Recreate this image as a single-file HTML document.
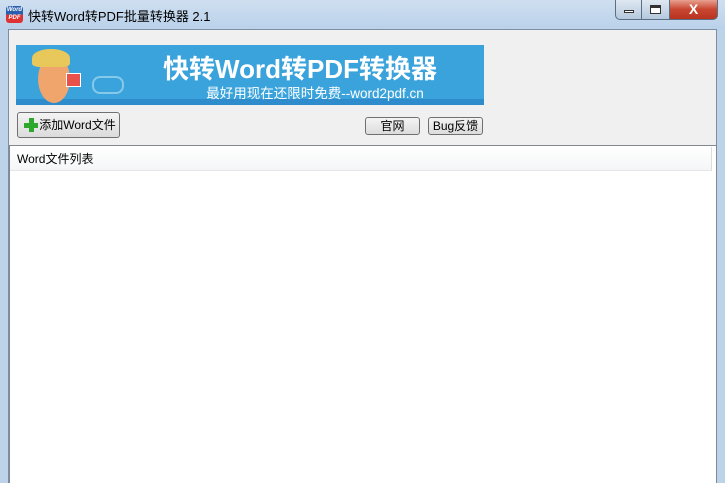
<!DOCTYPE html>
<html><head><meta charset="utf-8"><style>
*{margin:0;padding:0;box-sizing:border-box}
body{width:725px;height:483px;overflow:hidden;font-family:"Liberation Sans","Noto Sans CJK SC",sans-serif;background:#bcd3ea;position:relative}
.title{position:absolute;left:0;top:0;width:725px;height:30px;background:linear-gradient(#cfdff0,#b9d1ea);}
.ttext{position:absolute;left:28px;top:6px;font-size:13px;color:#000}
.icon{position:absolute;left:6px;top:6px;width:17px;height:17px;border-radius:3px;background:linear-gradient(#2a5fb0 50%,#d33 50%);color:#fff;font-size:6px;font-weight:bold;text-align:center;line-height:8px;font-style:italic}
.ctrl{position:absolute;top:0;height:20px;border:1px solid #5a6e85;border-top:none}
.client{position:absolute;left:8px;top:29px;width:709px;height:454px;background:#f0f0f0;border:1px solid #7d8ea3;border-bottom:none}
.banner{position:absolute;left:16px;top:45px;width:468px;height:60px;background:#3aa3dc;overflow:hidden}
.btn{position:absolute;border:1px solid #707070;border-radius:3px;background:linear-gradient(#f4f4f4,#dcdcdc);font-size:12px;color:#000;text-align:center}
.list{position:absolute;left:9px;top:145px;width:708px;height:338px;background:#fff;border:1px solid #828790;border-bottom:none}
.hdr{position:absolute;left:0;top:1px;width:702px;height:24px;background:linear-gradient(#fff,#f5f6f7);border-bottom:1px solid #e5e5e5;border-right:1px solid #ddd;font-size:12px;line-height:24px;padding-left:7px}
</style></head><body>
<div class="title">
<div class="icon">Word<br>PDF</div>
<div class="ttext">快转Word转PDF批量转换器 2.1</div>
<div class="ctrl" style="left:615px;width:27px;border-radius:0 0 0 5px;background:linear-gradient(#dfe8f2,#b5c8dc)"><div style="position:absolute;left:8px;top:10px;width:10px;height:3px;border:1px solid #333;background:#fff"></div></div>
<div class="ctrl" style="left:642px;width:28px;border-left:none;background:linear-gradient(#dfe8f2,#b5c8dc)"><div style="position:absolute;left:8px;top:5px;width:11px;height:9px;border:1px solid #333;border-top-width:3px;background:#fff"></div></div>
<div class="ctrl" style="left:670px;width:48px;border-left:none;border-radius:0 0 5px 0;background:linear-gradient(#e8a090,#c8452f 50%,#b93420);color:#fff;font-weight:bold;font-size:14px;text-align:center;line-height:18px">X</div>
</div>
<div class="client"></div>
<div class="banner">
<div style="position:absolute;left:0;bottom:0;width:468px;height:6px;background:#2e8ccc"></div>
<div style="position:absolute;left:22px;top:10px;width:32px;height:48px;border-radius:50%;background:#f0a56c"></div>
<div style="position:absolute;left:16px;top:4px;width:38px;height:18px;border-radius:50% 50% 20% 20%;background:#e8c85a"></div>
<div style="position:absolute;left:50px;top:28px;width:15px;height:14px;background:#e8524a;border:1px solid #fff"></div>
<div style="position:absolute;left:76px;top:31px;width:32px;height:18px;border:2px solid #a8d8f0;border-radius:8px;opacity:.7"></div>
<div style="position:absolute;left:0;right:0;top:4px;text-align:center;padding-left:100px;color:#fff;font-size:26px;font-weight:bold;white-space:nowrap">快转Word转PDF转换器</div>
<div style="position:absolute;left:0;right:0;top:37px;text-align:center;padding-left:130px;color:#fff;font-size:13.5px;white-space:nowrap">最好用现在还限时免费--word2pdf.cn</div>
</div>
<div class="btn" style="left:17px;top:112px;width:103px;height:26px;line-height:24px;padding-left:18px">
<span style="position:absolute;left:6px;top:5px;width:14px;height:14px"><span style="position:absolute;left:5px;top:0;width:5px;height:14px;background:#2da82d"></span><span style="position:absolute;left:0;top:5px;width:14px;height:5px;background:#2da82d"></span></span>添加Word文件</div>
<div class="btn" style="left:365px;top:117px;width:55px;height:18px;line-height:16px">官网</div>
<div class="btn" style="left:428px;top:117px;width:55px;height:18px;line-height:16px">Bug反馈</div>
<div class="list"><div class="hdr">Word文件列表</div></div>
</body></html>
